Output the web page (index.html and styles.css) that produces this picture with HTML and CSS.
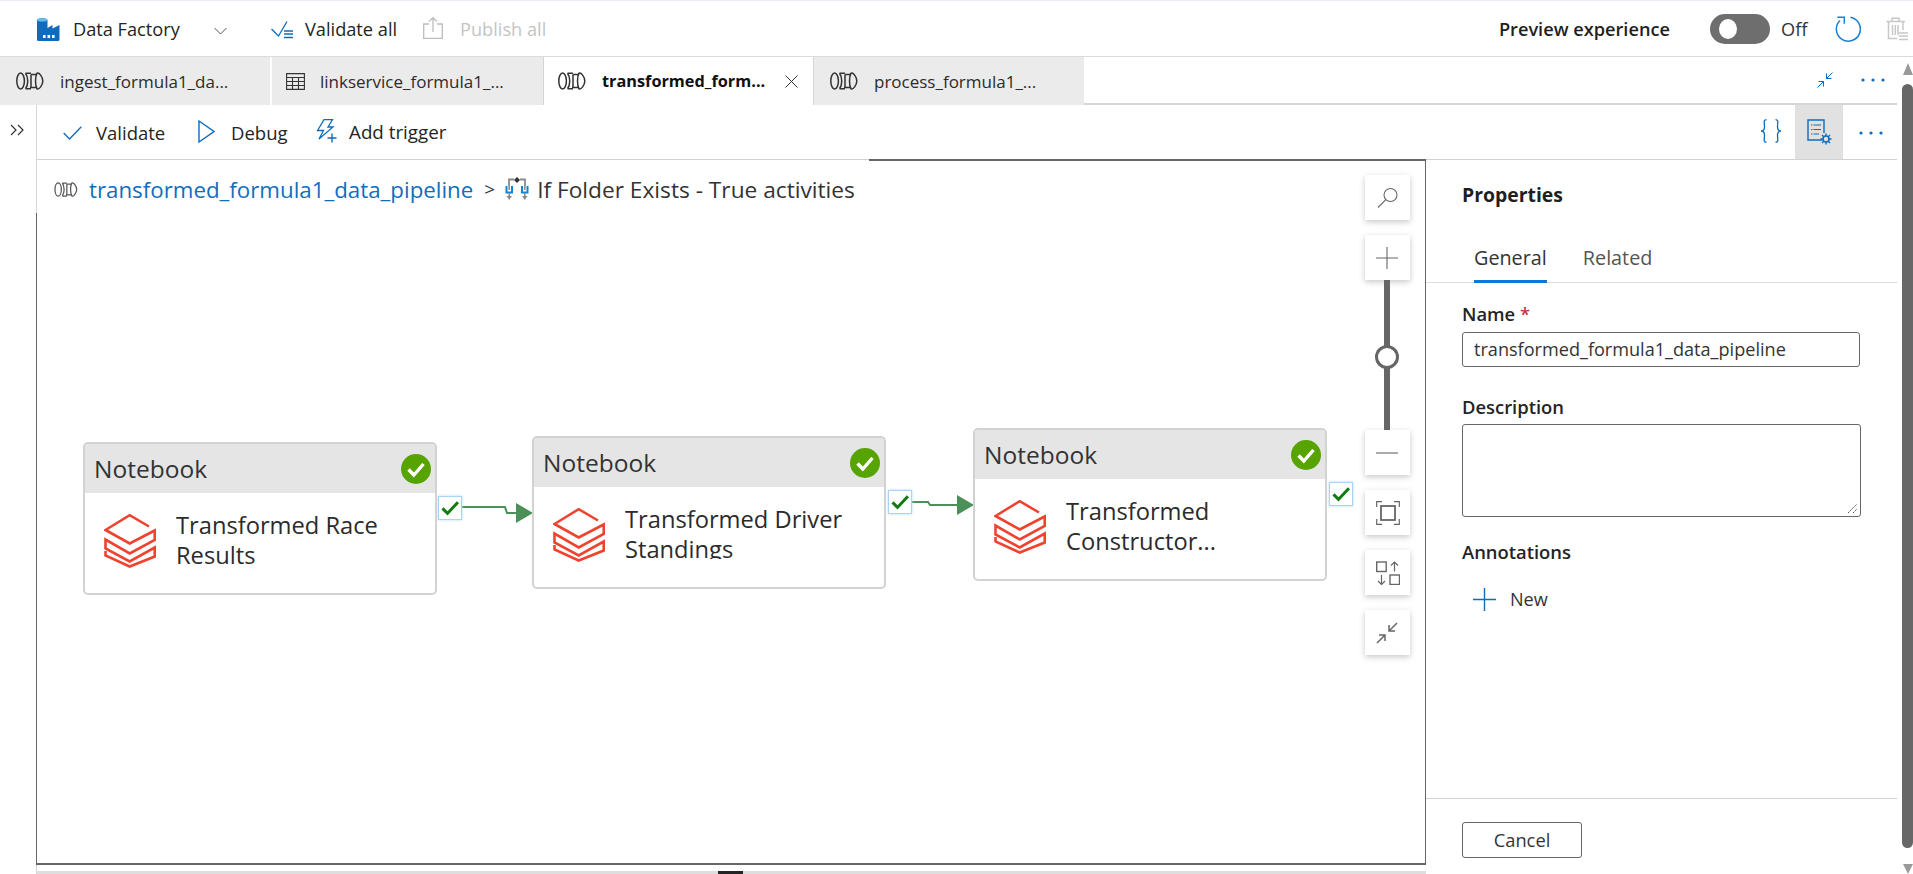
FILE: index.html
```html
<!DOCTYPE html>
<html lang="en">
<head>
<meta charset="utf-8">
<title>Data Factory</title>
<link rel="stylesheet" href="styles.css">
</head>
<body>
<svg class="defs" aria-hidden="true">
  <symbol id="pipe" viewBox="0 0 28 18"><g fill="none" stroke="currentColor" stroke-width="1.500"><ellipse cx="4.600" cy="9" rx="3.800" ry="8"/><path d="M9.500 1.200C12.500 5 12.500 13 9.500 16.800M9.500 1.200H15M9.500 16.800H15M15 2.600H21M14 15.400H21M15 2.600V15.400"/><path d="M21 1.200C19 5 19 13 21 16.800C23 18 26.800 13 26.800 9C26.800 5 23 0 21 1.200Z"/></g></symbol>
  <symbol id="brick" viewBox="0 0 52 54"><path d="M45 12.500L25.700 1.200L1.500 16L25.700 29.500L50.700 16.500V26L25.700 39.500L1.500 25.500V34.500L25.700 47.500L50.700 33.500V42.500L25.700 52.500L1.500 41.500V37" fill="none" stroke="#f0432f" stroke-width="2.600"/></symbol>
  <symbol id="okc" viewBox="0 0 30 30"><circle cx="15" cy="15" r="15" fill="#57a300"/><path d="M7.500 15.500L12.800 21L22.500 10" fill="none" stroke="#fff" stroke-width="3.400"/></symbol>
  <symbol id="tick" viewBox="0 0 24 24"><path d="M3 12.500L9 18.500L21.500 5" fill="none" stroke="#107c10" stroke-width="3.600"/></symbol>
  <symbol id="dots" viewBox="0 0 26 6"><g fill="#0f6cbd"><circle cx="3" cy="3" r="1.600"/><circle cx="13" cy="3" r="1.600"/><circle cx="23" cy="3" r="1.600"/></g></symbol>
</svg>

<header class="topbar">
  <svg class="i-logo" viewBox="0 0 23 24"><path d="M0 22.500V3C0 .5 10.500 .5 10.500 3V11L15.500 8V11.500L22.500 8V22.500Q22.500 24 21 24H1.500Q0 24 0 22.500Z" fill="#0f6cbd"/><path d="M0 3C0 .5 10.500 .5 10.500 3C10.500 5 0 5 0 3Z" fill="#62c0ea"/><g fill="#fff"><rect x="6" y="18" width="2.600" height="3"/><rect x="10.500" y="18" width="2.600" height="3"/><rect x="15" y="18" width="2.600" height="3"/></g></svg>
  <span class="t-df">Data Factory</span>
  <svg class="i-chev" viewBox="0 0 13 8"><path d="M.5 1L6.500 7L12.500 1" fill="none" stroke="#555" stroke-width="1"/></svg>
  <svg class="i-vall" viewBox="0 0 22 18"><path d="M.5 8L7.500 15L16 .5" fill="none" stroke="#0f6cbd" stroke-width="1.300"/><path d="M13 10H22M13 13H22M13 16.500H22" stroke="#0f6cbd" stroke-width="1.500"/></svg>
  <span class="t-vall">Validate all</span>
  <svg class="i-pub" viewBox="0 0 20 22"><path d="M6 7H.7V21.300H19.300V7H14M10 15V1M6 4.500L10 .7L14 4.500" fill="none" stroke="#bdbdbd" stroke-width="1.300"/></svg>
  <span class="t-pub">Publish all</span>
  <div class="top-right">
    <span class="t-prev">Preview experience</span>
    <span class="toggle"><span class="knob"></span></span>
    <span class="t-off">Off</span>
    <svg class="i-refresh" viewBox="0 0 26 26"><path d="M15.500 1.300A12 12 0 1 1 5 4.500M2.300 1.300H9.300V7.800" fill="none" stroke="#1b7fd4" stroke-width="1.500"/></svg>
    <svg class="i-trash" viewBox="0 0 22 24"><path d="M2.500 5V21.500H11M17 5V13M.3 4.500H19M6 4.500V1.300H13V4.500M6.500 8V18M9.300 8V18M12 8V18" fill="none" stroke="#c8c8c8" stroke-width="1.500"/><path d="M13 16H22M13 19H22M13 22.500H22" stroke="#c8c8c8" stroke-width="1.700"/></svg>
  </div>
</header>

<div class="shell">
  <div class="work">
    <nav class="tabs">
      <div class="tab tab-a"><svg class="i-pipe"><use href="#pipe"/></svg><span>ingest_formula1_da...</span></div>
      <div class="tab tab-b"><svg class="i-table" viewBox="0 0 19 17"><path d="M.6.6H18.400V16.400H.6ZM.6 4.500H18.400M.6 8.500H18.400M.6 12.500H18.400M6.500 4.500V16.400M12.500 4.500V16.400" fill="none" stroke="#333" stroke-width="1.100"/></svg><span>linkservice_formula1_...</span></div>
      <div class="tab tab-c"><svg class="i-pipe"><use href="#pipe"/></svg><span class="active-name">transformed_form...</span><svg class="i-x" viewBox="0 0 13 13"><path d="M.5.5L12.500 12.500M12.500.5L.5 12.500" stroke="#333" stroke-width="1"/></svg></div>
      <div class="tab tab-d"><svg class="i-pipe"><use href="#pipe"/></svg><span>process_formula1_...</span></div>
      <div class="tabs-fill">
        <svg class="i-min" viewBox="0 0 16 16"><path d="M15.500.5L9.500 6.500M9.500 1.500V6.500H14.500M.5 15.500L6.500 9.500M1.500 9.500H6.500V14.500" fill="none" stroke="#0f6cbd" stroke-width="1"/></svg>
        <svg class="i-dots"><use href="#dots"/></svg>
      </div>
    </nav>

    <div class="main">
      <div class="rail"><svg class="i-rail" viewBox="0 0 14 12"><path d="M1 1L6 6L1 11M8 1L13 6L8 11" fill="none" stroke="#333" stroke-width="1.200"/></svg></div>
      <div class="stage">
        <div class="cmdbar">
          <svg class="i-check" viewBox="0 0 19 14"><path d="M.7 7L6.500 13L18.300.7" fill="none" stroke="#0f6cbd" stroke-width="1.300"/></svg>
          <span class="t-validate">Validate</span>
          <svg class="i-play" viewBox="0 0 17 23"><path d="M1 1L16 11.500L1 22Z" fill="none" stroke="#0f6cbd" stroke-width="1.400"/></svg>
          <span class="t-debug">Debug</span>
          <svg class="i-trig" viewBox="0 0 22 24"><path d="M9 .7H17.500L13 8H18L4 20L8.500 11.500H2.500Z" fill="none" stroke="#0f6cbd" stroke-width="1.300"/><path d="M17 14.500V23.500M12.500 19H21.500" stroke="#0f6cbd" stroke-width="1.400"/></svg>
          <span class="t-trig">Add trigger</span>
          <div class="cmd-right">
            <svg class="i-json" viewBox="0 0 22 24"><path d="M6.500 .7C3 .7 4.500 4 4.500 8C4.500 10.500 3.500 12 1 12C3.500 12 4.500 13.500 4.500 16C4.500 20 3 23.300 6.500 23.300M15.500 .7C19 .7 17.500 4 17.500 8C17.500 10.500 18.500 12 21 12C18.500 12 17.500 13.500 17.500 16C17.500 20 19 23.300 15.500 23.300" fill="none" stroke="#0f6cbd" stroke-width="1.300"/></svg>
            <span class="cmd-active"><svg class="i-props" viewBox="0 0 25 26"><path d="M15 21H1V1H17V14" fill="none" stroke="#0f6cbd" stroke-width="1.400"/><path d="M4 6H14M4 10.500H14M4 15H12" stroke="#0f6cbd" stroke-width="1.200" stroke-dasharray="1.500 1 8 0"/><circle cx="19" cy="20" r="3" fill="none" stroke="#0f6cbd" stroke-width="1.600"/><path d="M19 14.500V17M19 23V25.500M13.500 20H16M22 20H24.500M15 16L17 18M21 22L23 24M23 16L21 18M17 22L15 24" stroke="#0f6cbd" stroke-width="1.400"/></svg></span>
            <svg class="i-dots2"><use href="#dots"/></svg>
          </div>
        </div>

        <div class="body">
          <div class="canvas-col">
            <section class="canvas">
              <div class="crumb">
                <svg class="i-pipe-g"><use href="#pipe"/></svg>
                <a class="crumb-link">transformed_formula1_data_pipeline</a>
                <span class="crumb-sep">&gt;</span>
                <svg class="i-if" viewBox="0 0 24 24"><path d="M9 2.500H4V9M15 2.500H20V9" fill="none" stroke="#8a8a8a" stroke-width="1.800"/><path d="M12 0L15 3L12 6L9 3Z" fill="#333"/><path d="M1.500 9V15.500H7V9M17 9V15.500H22.500V9" fill="none" stroke="#0f86d8" stroke-width="2"/><path d="M4.200 9V13M19.800 9V13M4.200 16V19M19.800 16V19" stroke="#8a8a8a" stroke-width="1.500"/><path d="M1.500 19L4.200 23L7 19ZM17 19L19.800 23L22.500 19Z" fill="#8a8a8a"/></svg>
                <span class="crumb-name">If Folder Exists - True activities</span>
              </div>

              <svg class="links" viewBox="0 0 1388 704">
                <path d="M425 347H468L470 353H480M874 342H891L893 345H921" fill="none" stroke="#4a9058" stroke-width="2"/>
                <path d="M479 343L496 353L479 363ZM920 335L937 345L920 355Z" fill="#4a9058"/>
              </svg>

              <article class="node n1">
                <div class="node-head"><span>Notebook</span><svg class="i-okc"><use href="#okc"/></svg></div>
                <div class="node-body"><svg class="i-brick"><use href="#brick"/></svg><div class="node-name">Transformed Race Results</div></div>
              </article>
              <span class="out o1"><svg class="i-tick"><use href="#tick"/></svg></span>

              <article class="node n2">
                <div class="node-head"><span>Notebook</span><svg class="i-okc"><use href="#okc"/></svg></div>
                <div class="node-body"><svg class="i-brick"><use href="#brick"/></svg><div class="node-name">Transformed Driver Standings</div></div>
              </article>
              <span class="out o2"><svg class="i-tick"><use href="#tick"/></svg></span>

              <article class="node n3">
                <div class="node-head"><span>Notebook</span><svg class="i-okc"><use href="#okc"/></svg></div>
                <div class="node-body"><svg class="i-brick"><use href="#brick"/></svg><div class="node-name">Transformed Constructor...</div></div>
              </article>
              <span class="out o3"><svg class="i-tick"><use href="#tick"/></svg></span>

              <div class="zoomer">
                <button class="zb zb-gap"><svg class="z22" viewBox="0 0 22 22"><circle cx="13.500" cy="8" r="6.500" fill="none" stroke="#666" stroke-width="1.100"/><path d="M8.800 12.700L1 20.500" stroke="#666" stroke-width="1.100"/></svg></button>
                <button class="zb"><svg class="z22 zp" viewBox="0 0 22 22"><path d="M11 0V22M0 11H22" stroke="#666" stroke-width="1.100"/></svg></button>
                <div class="track"><span class="thumb"></span></div>
                <button class="zb zb-gap"><svg class="z22 zp" viewBox="0 0 22 22"><path d="M0 11H22" stroke="#666" stroke-width="1.100"/></svg></button>
                <button class="zb zb-gap"><svg class="z24" viewBox="0 0 24 24"><path d="M.7 6V.7H6M18 .7H23.300V6M.7 18V23.300H6M18 23.300H23.300V18" fill="none" stroke="#666" stroke-width="1.200"/><rect x="5" y="5" width="14" height="14" fill="none" stroke="#666" stroke-width="1.800"/></svg></button>
                <button class="zb zb-gap"><svg class="z24" viewBox="0 0 24 24"><rect x=".7" y="1" width="9.500" height="9.500" fill="none" stroke="#666" stroke-width="1.400"/><rect x="14" y="14" width="9.500" height="9.500" fill="none" stroke="#666" stroke-width="1.400"/><path d="M18.500 10.500V1M15 4.500L18.500 1L22 4.500M5.500 14V23.500M2 20L5.500 23.500L9 20" fill="none" stroke="#666" stroke-width="1.200"/></svg></button>
                <button class="zb"><svg class="z22 zp" viewBox="0 0 22 22"><path d="M21 1L13 9M13 3V9H19M1 21L9 13M3 13H9V19" fill="none" stroke="#666" stroke-width="1.500"/></svg></button>
              </div>
            </section>
            <div class="hbar"><span class="hbar-grip"></span></div>
          </div>

          <aside class="panel">
            <h2 class="p-title">Properties</h2>
            <div class="p-tabs"><span class="p-tab p-on">General</span><span class="p-tab">Related</span></div>
            <div class="p-form">
              <label class="lbl lbl-name">Name <em>*</em></label>
              <div class="inp">transformed_formula1_data_pipeline</div>
              <label class="lbl lbl-desc">Description</label>
              <div class="area"><svg class="i-grip" viewBox="0 0 11 11"><path d="M1 10L10 1M6 10L10 6" stroke="#555" stroke-width="1" stroke-dasharray="2 1"/></svg></div>
              <label class="lbl lbl-ann">Annotations</label>
              <div class="new"><svg class="i-plus" viewBox="0 0 23 23"><path d="M11.500 0V23M0 11.500H23" stroke="#0f6cbd" stroke-width="1.400"/></svg><span>New</span></div>
            </div>
            <div class="p-foot"><button class="btn">Cancel</button></div>
          </aside>
        </div>
      </div>
    </div>
  </div>
  <div class="scroll">
    <span class="sc-up"></span>
    <span class="sc-thumb"></span>
    <span class="sc-down"></span>
  </div>
</div>
</body>
</html>
```

FILE: styles.css
```css
* { box-sizing: border-box; }
html, body { margin: 0; height: 100%; }
body {
  width: 1913px; height: 874px; overflow: hidden; background: #fff; color: #242424;
  font-family: "Open Sans", "Noto Sans", sans-serif; font-size: 18.2px;
}
svg { display: block; flex: none; }
.defs { position: absolute; width: 0; height: 0; }

/* top bar */
.topbar {
  height: 57px; display: flex; align-items: center;
  border-top: 1px solid #efe8f2; border-bottom: 1px solid #dcdcdc;
}
.i-logo { width: 23px; height: 24px; margin-left: 37px; }
.t-df { margin-left: 13px; width: 141px; }
.i-chev { width: 13px; height: 8px; margin-top: 4px; }
.i-vall { width: 22px; height: 18px; margin-left: 44px; margin-top: 3px; }
.t-vall { margin-left: 12px; width: 118px; }
.i-pub { width: 20px; height: 22px; margin-top: -2px; }
.t-pub { margin-left: 17px; color: #c4c4c4; }
.top-right { margin-left: auto; display: flex; align-items: center; padding-right: 5px; }
.t-prev { font-weight: 600; color: #1f1f1f; margin-right: 40px; }
.toggle { width: 60px; height: 30px; border-radius: 15px; background: #6e6e6e; display: flex; align-items: center; padding-left: 9px; }
.knob { width: 18px; height: 20px; border-radius: 50%; background: #fff; }
.t-off { margin-left: 11px; width: 54px; color: #333; }
.i-refresh { width: 26px; height: 26px; }
.i-trash { width: 22px; height: 24px; margin-left: 25px; }

/* layout */
.shell { display: flex; height: 817px; }
.work { width: 1897px; display: flex; flex-direction: column; }
.scroll { width: 11px; margin-left: 5px; display: flex; flex-direction: column; align-items: center; padding-top: 6px; }
.sc-up { border-left: 5.5px solid transparent; border-right: 5.5px solid transparent; border-bottom: 12px solid #9a9a9a; }
.sc-thumb { width: 11px; height: 764px; margin-top: 9px; margin-bottom: 16px; border-radius: 6px; background: #676767; }
.sc-down { border-left: 5.5px solid transparent; border-right: 5.5px solid transparent; border-top: 10px solid #9a9a9a; }

/* tabs */
.tabs { display: flex; height: 48px; font-size: 17px; color: #2b2b2b; }
.tab { height: 48px; display: flex; align-items: center; background: #ebebeb; }
.tab-a { width: 270px; margin-right: 2px; padding-left: 16px; }
.tab-b { width: 271px; padding-left: 14px; }
.tab-c { width: 271px; background: #fff; border-left: 1px solid #d4d4d4; border-right: 1px solid #d4d4d4; padding-left: 14px; }
.tab-d { width: 270px; padding-left: 16px; }
.i-pipe { width: 28px; height: 18px; margin-right: 16px; color: #333; }
.i-table { width: 19px; height: 17px; margin-right: 15px; }
.active-name { font-weight: 700; font-size: 16.3px; color: #111; width: 183px; white-space: nowrap; }
.i-x { width: 13px; height: 13px; }
.tabs-fill { flex: 1; height: 48px; border-bottom: 2px solid #d6d6d6; display: flex; align-items: center; padding-left: 733px; }
.i-min { width: 16px; height: 16px; margin-right: 27px; }
.i-dots { width: 26px; height: 6px; }

/* main */
.main { flex: 1; display: flex; min-height: 0; }
.rail { width: 37px; border-right: 1px solid #d6d6d6; padding: 19px 0 0 10px; }
.i-rail { width: 14px; height: 12px; }
.stage { flex: 1; display: flex; flex-direction: column; min-width: 0; }
.cmdbar { height: 55px; flex: none; border-bottom: 1px solid #d2d2d2; display: flex; align-items: center; font-size: 18.5px; }
.i-check { width: 19px; height: 14px; margin-left: 26px; margin-top: 2px; }
.t-validate { margin-left: 14px; width: 102px; }
.i-play { width: 17px; height: 23px; margin-top: -2px; }
.t-debug { margin-left: 16px; width: 84px; }
.i-trig { width: 22px; height: 24px; margin-top: -2px; }
.t-trig { margin-left: 12px; font-size: 18.8px; }
.cmd-right { margin-left: auto; display: flex; align-items: center; height: 54px; padding-right: 13px; }
.i-json { width: 22px; height: 24px; margin-right: 13px; margin-top: -2px; }
.cmd-active { width: 48px; height: 54px; background: #e1e1e1; display: flex; align-items: center; justify-content: center; }
.i-props { width: 25px; height: 26px; }
.i-dots2 { width: 26px; height: 6px; margin-left: 15px; margin-top: 2px; }
.body { flex: 1; display: flex; min-height: 0; }
.canvas-col { width: 1389px; display: flex; flex-direction: column; }

/* canvas */
.canvas { position: relative; height: 705px; border-right: 1px solid #666; border-bottom: 2px solid #666; }
.canvas::before { content: ""; position: absolute; left: -1px; top: 53px; bottom: -2px; width: 1px; background: #666; }
.canvas::after { content: ""; position: absolute; left: 832px; right: -1px; top: -1px; height: 2px; background: #666; }
.crumb { display: flex; align-items: center; height: 30px; margin-top: 14px; padding-left: 17px; font-size: 22.3px; color: #333; white-space: nowrap; }
.i-pipe-g { width: 24px; height: 15px; color: #555; margin-right: 11px; }
.crumb-link { color: #106ebe; }
.crumb-sep { margin-left: 11px; font-size: 19px; }
.i-if { width: 24px; height: 24px; margin-left: 10px; margin-right: 8px; }
.crumb-name { font-size: 22.7px; }
.links { position: absolute; left: 0; top: 0; width: 1388px; height: 704px; }

.node {
  position: absolute; width: 354px; height: 153px;
  background: #fff; border: 2px solid #d2d2d2; border-radius: 5px; overflow: hidden;
}
.n1 { left: 46px; top: 282px; }
.n2 { left: 495px; top: 276px; }
.n3 { left: 936px; top: 268px; }
.node-head { height: 49px; background: #e5e5e5; display: flex; align-items: center; justify-content: space-between; padding: 0 4px 0 9px; font-size: 24.5px; color: #333; }
.i-okc { width: 30px; height: 30px; }
.node-body { display: flex; padding: 17px 0 0 19px; }
.i-brick { width: 52px; height: 54px; margin-top: 4px; }
.node-name { margin-left: 20px; width: 262px; height: 62px; overflow: hidden; font-size: 23.7px; line-height: 30px; color: #2b2b2b; }
.n2 .node-name { height: 55px; }
.out {
  position: absolute; width: 24px; height: 24px; background: #fff; display: flex; align-items: center; justify-content: center;
  border: 1px solid #a9d3f5; box-shadow: 0 0 3px #b7dcf8;
}
.o1 { left: 401px; top: 336px; }
.o2 { left: 851px; top: 330px; }
.o3 { left: 1292px; top: 322px; }
.i-tick { width: 20px; height: 20px; }

.zoomer { position: absolute; left: 1328px; top: 15px; width: 45px; display: flex; flex-direction: column; }
.zb { width: 45px; height: 45px; padding: 0; border: 0; background: #fff; box-shadow: 0 2px 6px rgba(0,0,0,.22); display: flex; align-items: center; justify-content: center; }
.zb-gap { margin-bottom: 15px; }
.z22 { width: 22px; height: 22px; }
.zp { margin-right: 2px; }
.z24 { width: 24px; height: 24px; }
.track { position: relative; height: 150px; width: 6px; margin-left: 19px; background: #666; }
.thumb { position: absolute; left: -9px; top: 65px; width: 24px; height: 24px; border-radius: 50%; background: #fff; border: 3px solid #666; }
.hbar { height: 3px; margin-top: 6px; background: #dedede; display: flex; }
.hbar-grip { width: 25px; height: 3px; margin-left: 681px; background: #242424; }

/* properties */
.panel { flex: 1; display: flex; flex-direction: column; padding-left: 36px; }
.p-title { margin: 20px 0 0; font-size: 19.4px; line-height: 30px; font-weight: 700; color: #1f1f1f; }
.p-tabs { display: flex; height: 51px; margin: 22px 0 0 -36px; padding-left: 48px; border-bottom: 1px solid #dcdcdc; font-size: 19.8px; color: #555; }
.p-tab { height: 51px; line-height: 51px; margin-right: 36px; }
.p-on { color: #333; font-weight: 500; border-bottom: 3px solid #0f78d4; }
.p-form { display: flex; flex-direction: column; align-items: flex-start; font-size: 18.1px; }
.lbl { display: block; line-height: 24px; font-size: 18.4px; font-weight: 600; color: #242424; }
.lbl em { color: #c4314b; font-style: normal; }
.lbl-name { margin-top: 19px; }
.inp { margin-top: 6px; width: 398px; height: 35px; line-height: 32px; padding-left: 11px; border: 1px solid #666; border-radius: 3px; color: #333; }
.lbl-desc { margin-top: 28px; }
.area { position: relative; margin-top: 5px; width: 399px; height: 93px; border: 1px solid #666; border-radius: 3px; }
.i-grip { position: absolute; right: 2px; bottom: 2px; width: 11px; height: 11px; }
.lbl-ann { margin-top: 23px; }
.new { display: flex; align-items: center; height: 34px; margin-top: 18px; padding-left: 11px; color: #333; }
.i-plus { width: 23px; height: 23px; margin-right: 14px; }
.p-foot { margin: auto 0 0 -36px; height: 76px; padding: 23px 0 0 36px; border-top: 1px solid #d2d2d2; }
.btn { width: 120px; height: 36px; padding: 0 0 2px; background: #fff; border: 1px solid #666; border-radius: 3px; font: inherit; font-size: 18.3px; color: #333; }
```
